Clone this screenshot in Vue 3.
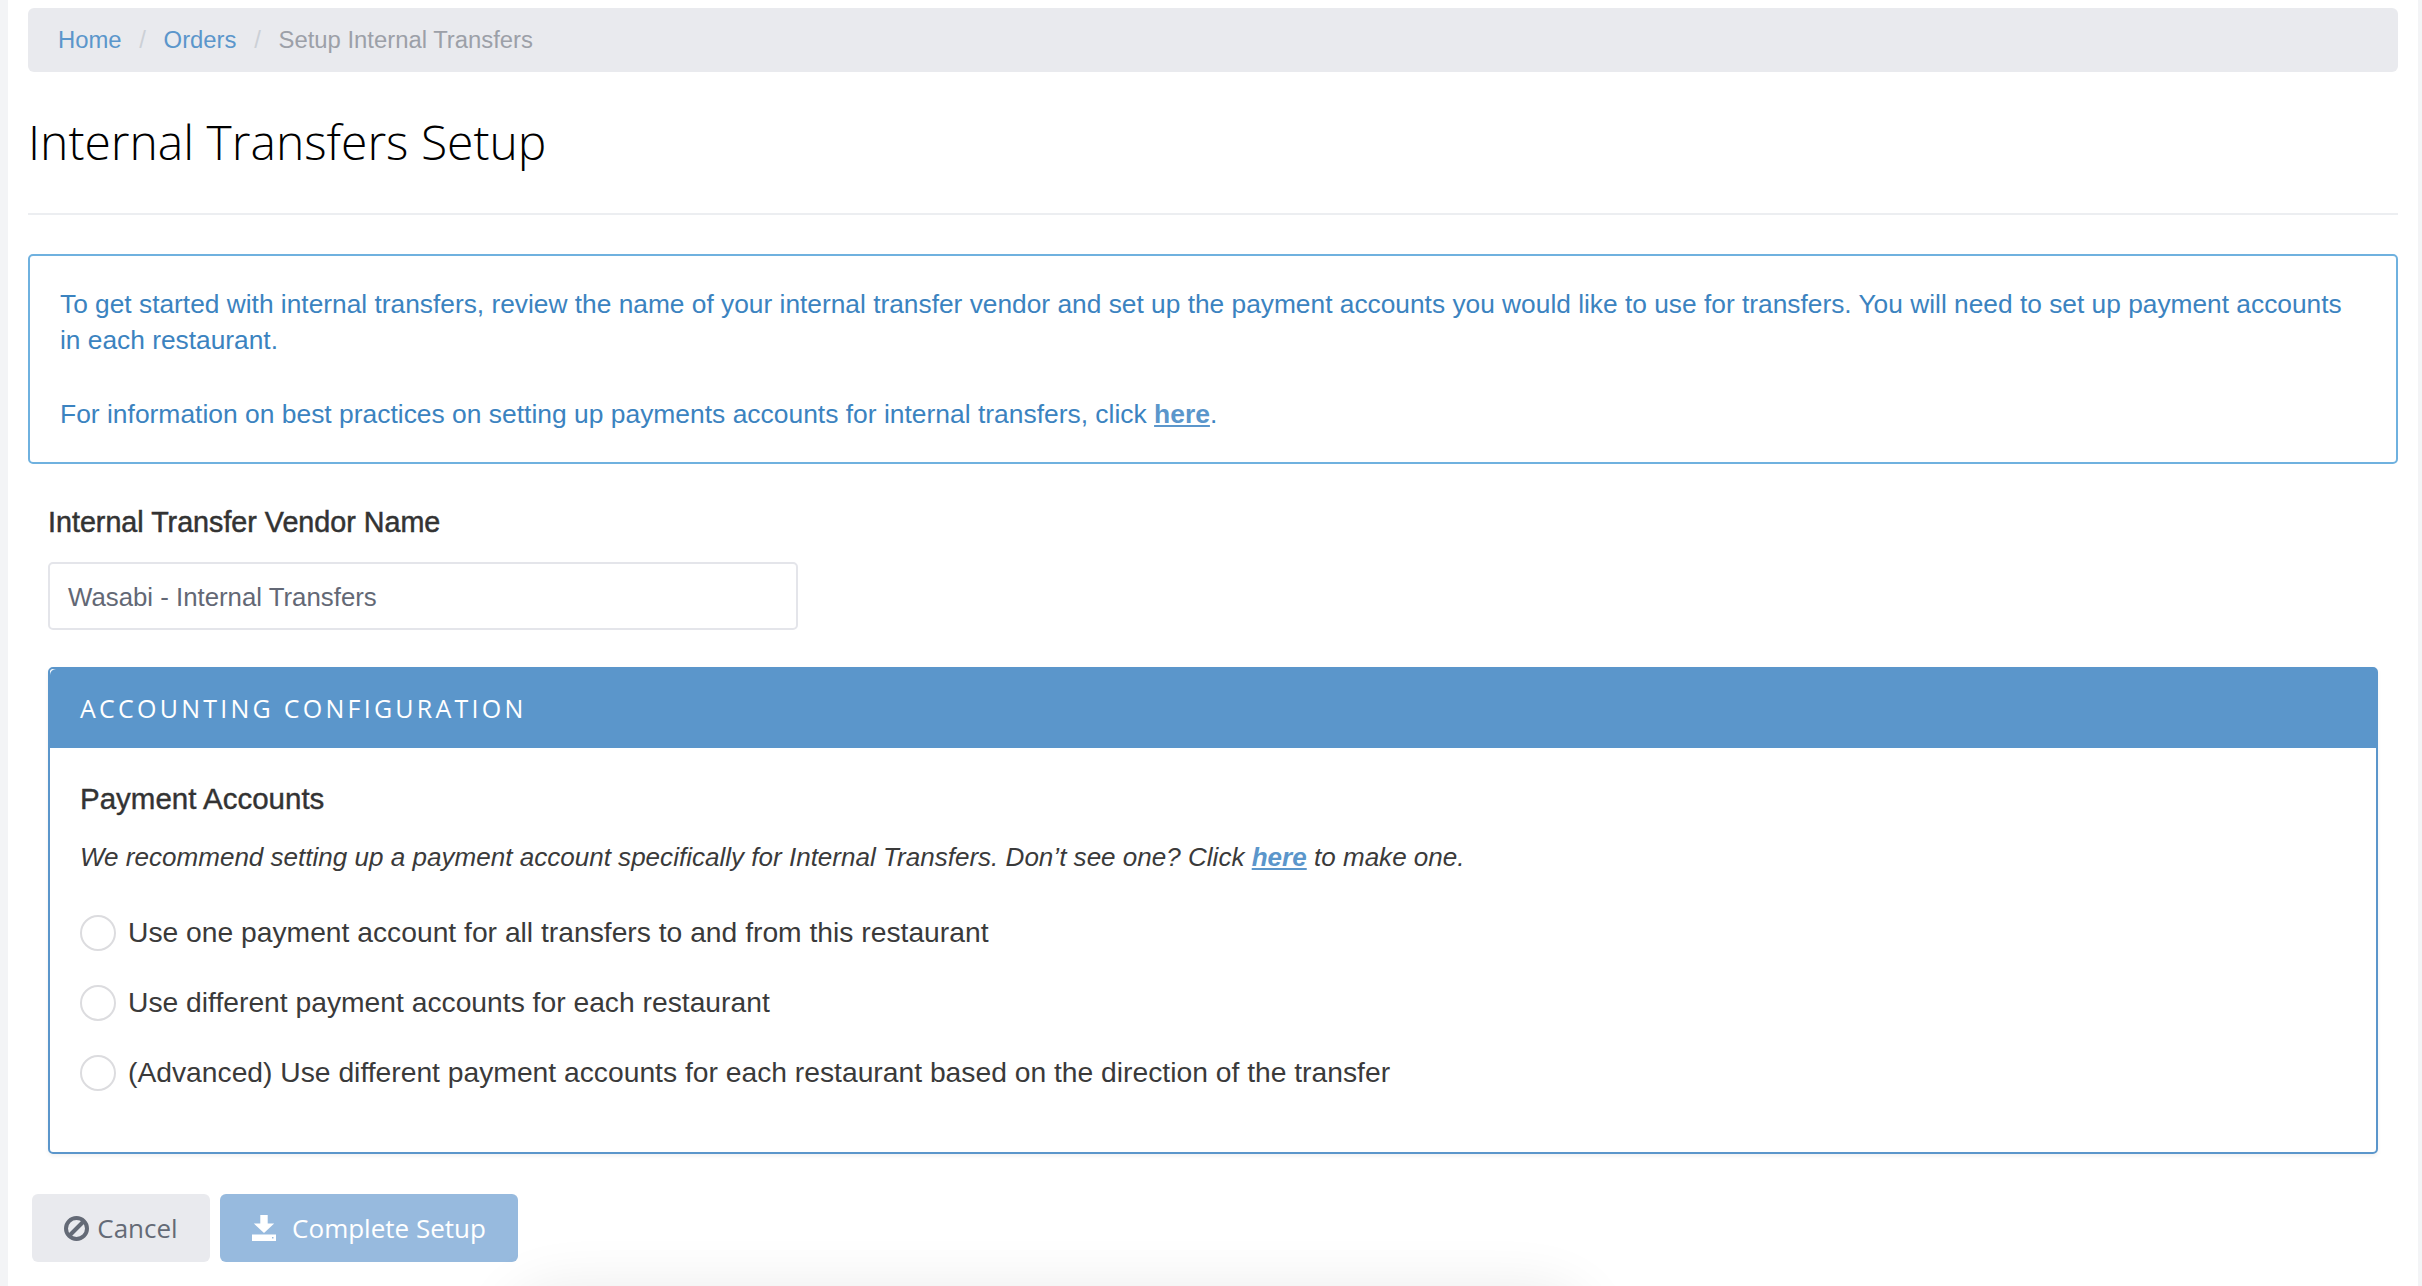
<script setup>
const options = [
  'Use one payment account for all transfers to and from this restaurant',
  'Use different payment accounts for each restaurant',
  '(Advanced) Use different payment accounts for each restaurant based on the direction of the transfer',
]
</script>

<template>
  <div class="page">
    <main class="content">
      <nav class="breadcrumb">
        <a class="crumb">Home</a><span class="sep">/</span>
        <a class="crumb">Orders</a><span class="sep">/</span>
        <span class="current">Setup Internal Transfers</span>
      </nav>
      <h1 class="title">Internal Transfers Setup</h1>
      <hr class="rule" />
      <div class="alert">
        <p class="lead">To get started with internal transfers, review the name of your internal transfer vendor and set up the payment accounts you would like to use for transfers. You will need to set up payment accounts in each restaurant.</p>
        <p>For information on best practices on setting up payments accounts for internal transfers, click <a class="strong-link">here</a>.</p>
      </div>
      <div class="inner">
        <label class="field-label">Internal Transfer Vendor Name</label>
        <div class="input"><span class="input-text">Wasabi - Internal Transfers</span></div>
        <section class="panel">
          <header class="panel-head">ACCOUNTING CONFIGURATION</header>
          <div class="panel-body">
            <h2 class="sub">Payment Accounts</h2>
            <p class="hint">We recommend setting up a payment account specifically for Internal Transfers. Don’t see one? Click <a class="strong-link">here</a> to make one.</p>
            <div class="options">
              <div v-for="o in options" :key="o" class="option">
                <span class="radio"></span><span class="option-text">{{ o }}</span>
              </div>
            </div>
          </div>
        </section>
      </div>
      <div class="actions">
        <button class="btn cancel">
          <svg viewBox="0 0 25 25" width="25" height="25"><circle cx="12.500" cy="12.500" r="10.500" fill="none" stroke="currentColor" stroke-width="4"/><path d="M5 20 20 5" stroke="currentColor" stroke-width="4"/></svg>
          <span>Cancel</span>
        </button>
        <button class="btn primary">
          <svg viewBox="0 0 24 26" width="24" height="26"><path d="M8.300 0h7.400v8.500h6.500L12 18 1.800 8.500h6.500z" fill="#fff"/><path fill-rule="evenodd" d="M0 19.500h24V26H0zM20 22h1.500v1.500H20z" fill="#fff"/></svg>
          <span>Complete Setup</span>
        </button>
      </div>
      <div class="bottom-glow"></div>
    </main>
  </div>
</template>

<style scoped>
.page { height: 1286px; overflow: hidden; background: #f3f4f6; padding: 0 4px 0 8px; box-sizing: border-box; font-family: "Liberation Sans", Arial, sans-serif; font-size: 26px; color: #3a3a3a; }
.content { position: relative; height: 1286px; overflow: hidden; background: #fff; padding: 8px 20px 0 20px; box-sizing: border-box; }
.breadcrumb { height: 64px; background: #e9eaee; border-radius: 6px; display: flex; align-items: center; padding: 0 30px; box-sizing: border-box; font-size: 23.850px; }
.crumb { color: #5b96cb; }
.sep { color: #ccd0d6; margin: 0 17.700px; }
.current { color: #9ca0a8; }
.title { margin: 40px 0 0; font-family: "Open Sans", sans-serif; font-weight: 300; font-size: 48px; line-height: 60px; color: #000; }
.rule { border: 0; height: 2px; background: #eceef1; margin: 41px 0 39px; }
.alert { border: 2px solid #6fb1df; border-radius: 5px; padding: 30px 30px; color: #3b83c0; line-height: 36px; height: 210px; box-sizing: border-box; font-size: 26.430px; }
.alert p { margin: 0 0 38px; }
.alert p:last-child { margin: 0; }
.alert .lead { font-size: 26.320px; }
.strong-link { font-weight: 700; text-decoration: underline; color: #5b96cb; }
.inner { padding: 0 20px; }
.field-label { display: block; margin-top: 40px; font-size: 28.700px; line-height: 36px; color: #333; -webkit-text-stroke: 0.5px #333; }
.input { margin-top: 22px; width: 750px; height: 68px; box-sizing: border-box; border: 2px solid #e4e5ea; border-radius: 5px; padding: 2px 18px 0; display: flex; align-items: center; color: #636875; font-size: 25.800px; }
.panel { margin-top: 37px; border: 2px solid #5b96cb; border-radius: 5px; height: 487px; box-sizing: border-box; box-shadow: 0 2px 4px rgba(0,0,0,.06); }
.panel-head { height: 79px; background: #5b96cb; color: #fff; font-family: "Open Sans", sans-serif; font-size: 25px; letter-spacing: 3.250px; display: flex; align-items: center; padding: 0 30px 2px; box-sizing: border-box; border-radius: 6px 0 0 0; }
.panel-body { padding: 33px 30px 0; }
.sub { margin: 0; font-size: 29.500px; font-weight: 400; line-height: 36px; color: #333; -webkit-text-stroke: 0.4px #333; }
.hint { margin: 22px 0 0; font-style: italic; line-height: 36px; font-size: 26.050px; }
.options { margin-top: 40px; display: flex; flex-direction: column; gap: 34px; }
.option { display: flex; align-items: center; gap: 12px; line-height: 36px; height: 36px; font-size: 28.250px; }
.option-text { position: relative; top: -1px; }
.radio { width: 36px; height: 36px; border: 2px solid #dcdcdf; border-radius: 50%; box-sizing: border-box; flex: none; }
.actions { display: flex; gap: 10px; margin: 40px 0 0 4px; }
.btn { height: 68px; border: 0; border-radius: 6px; font-family: "Open Sans", sans-serif; font-size: 26px; display: flex; align-items: center; justify-content: center; padding: 0; box-sizing: border-box; white-space: nowrap; flex: none; }
.cancel { width: 178px; background: #e9eaee; color: #646a76; gap: 8px; }
.primary { width: 298px; background: #97bade; color: #fff; gap: 16px; }
.bottom-glow { position: absolute; left: 520px; width: 1040px; top: 1310px; height: 60px; border-radius: 50px; box-shadow: 0 0 60px 20px rgba(0,0,0,.09); }
</style>
